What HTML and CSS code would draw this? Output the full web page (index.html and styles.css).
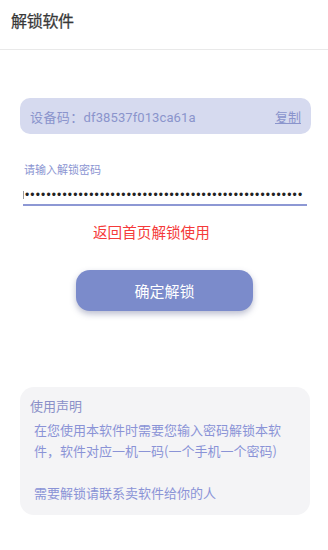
FILE: index.html
```html
<!DOCTYPE html>
<html>
<head>
<meta charset="utf-8">
<link rel="stylesheet" href="styles.css">
</head>
<body>
<header class="bar"><span class="title">解锁软件</span></header>
<main class="page">
  <div class="device">
    <span class="code">设备码：<span class="latin">df38537f013ca61a</span></span>
    <span class="copy">复制</span>
  </div>
  <div class="label">请输入解锁密码</div>
  <div class="field"><span class="caret"></span><span class="dots">••••••••••••••••••••••••••••••••••••••••••••••••••••</span></div>
  <div class="hint">返回首页解锁使用</div>
  <button class="btn">确定解锁</button>
  <section class="card">
    <div class="card-title">使用声明</div>
    <p class="card-text">在您使用本软件时需要您输入密码解锁本软件，软件对应一机一码(一个手机一个密码)</p>
    <p class="card-text gap">需要解锁请联系卖软件给你的人</p>
  </section>
</main>
</body>
</html>
```
FILE: styles.css
```css
* { box-sizing: border-box; }
html, body { margin: 0; padding: 0; background: #ffffff; }
body {
  width: 328px;
  height: 550px;
  overflow: hidden;
  font-family: "Noto Sans CJK SC", "Noto Sans", sans-serif;
}
.bar {
  height: 50px;
  border-bottom: 1px solid #e9e9e9;
  padding: 8px 0 0 11px;
}
.title {
  font-size: 16px;
  line-height: 24px;
  color: #383838;
  font-weight: 400;
  letter-spacing: -0.3px;
  -webkit-text-stroke: 0.25px #383838;
}
.page {
  display: flex;
  flex-direction: column;
  padding: 0 17px 0 20px;
}
.device {
  margin-top: 48px;
  height: 36px;
  border-radius: 10px;
  background: #d6daef;
  display: flex;
  align-items: center;
  justify-content: space-between;
  padding: 0 10px 0 10px;
  color: #8a94cc;
  font-size: 13px;
}
.code { letter-spacing: 0.4px; }
.latin {
  font-family: Roboto, "Noto Sans", sans-serif;
  letter-spacing: 0.1px;
}
.copy { text-decoration: underline; }
.label {
  margin-top: 27px;
  margin-left: 4px;
  font-size: 11px;
  line-height: 16px;
  color: #8b95d2;
}
.field {
  margin: 9px 4px 0 3px;
  height: 20px;
  border-bottom: 2px solid #8d98d4;
  display: flex;
  align-items: center;
  overflow: hidden;
}
.caret {
  width: 1px;
  height: 8px;
  background: #999;
  margin-right: 1px;
}
.dots {
  font-family: "Liberation Sans", sans-serif;
  font-size: 12px;
  letter-spacing: 1.15px;
  color: #222222;
  line-height: 14px;
  white-space: nowrap;
}
.hint {
  margin-top: 16px;
  margin-left: 73px;
  font-size: 14.6px;
  line-height: 20px;
  color: #f53a3a;
}
.btn {
  margin: 28px 0 0 56px;
  width: 177px;
  height: 41px;
  border: none;
  border-radius: 14px;
  background: #7b8bcb;
  color: #ffffff;
  font-family: "Noto Sans CJK SC", sans-serif;
  font-size: 15px;
  box-shadow: 0 3px 6px rgba(60, 70, 120, 0.35);
}
.card {
  margin-top: 76px;
  width: 290px;
  height: 128px;
  border-radius: 14px;
  background: #f4f4f6;
  padding: 9px 26px 0 10px;
  color: #8a93d6;
  font-size: 13px;
}
.card-title { line-height: 20px; color: #8a90c8; }
.card-text {
  margin: 3px 0 0 4px;
  line-height: 21px;
}
.card-text.gap { margin-top: 21px; }
```
